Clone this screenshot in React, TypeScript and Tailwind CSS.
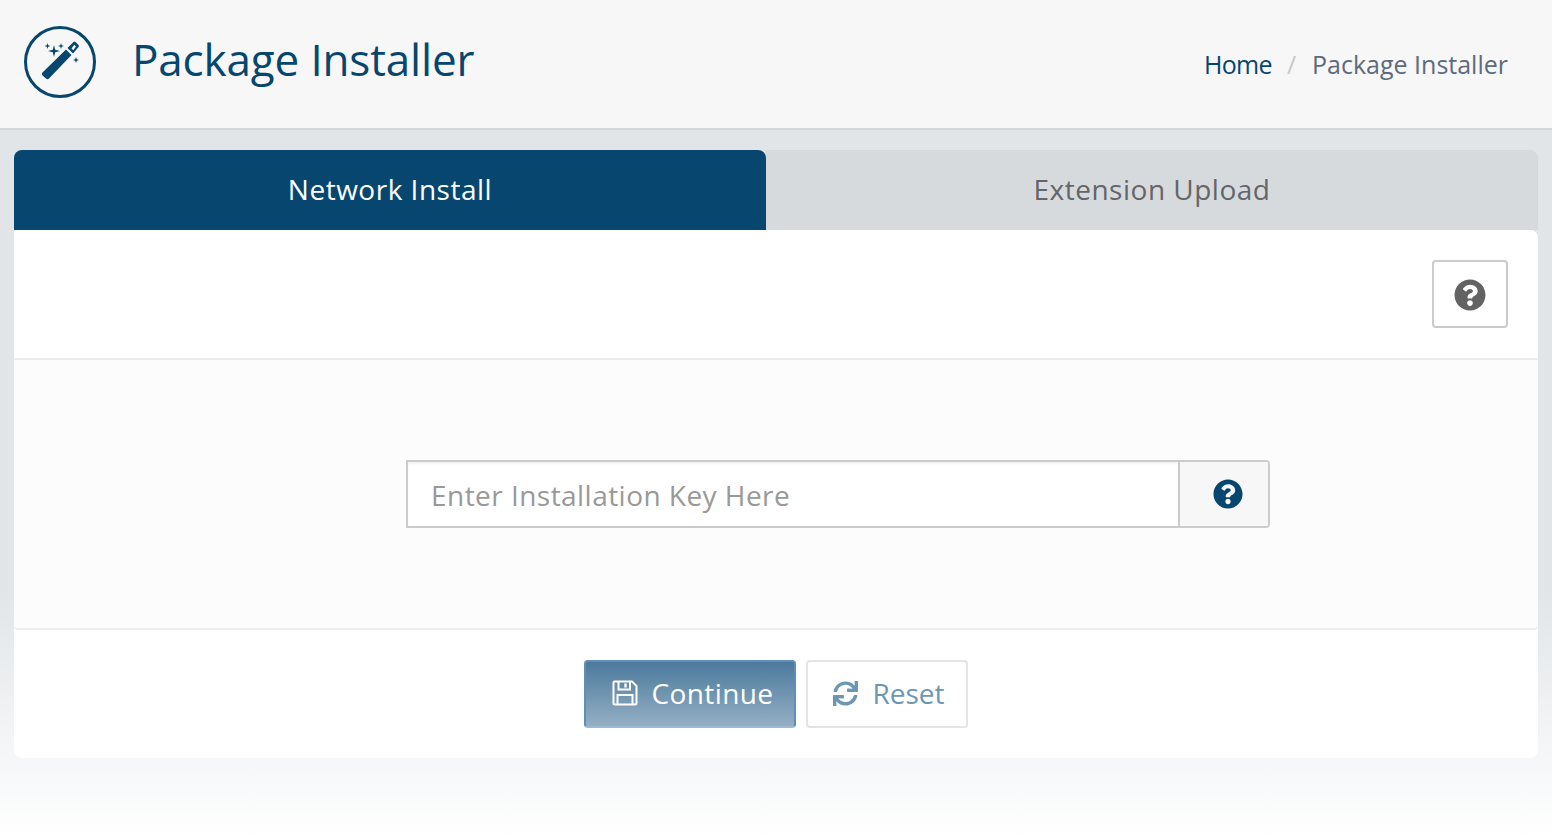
import { FaQuestionCircle, FaSync } from "react-icons/fa";

function Wand() {
  return (
    <svg viewBox="0 0 72 72" className="w-[72px] h-[72px] shrink-0">
      <circle cx="36" cy="36" r="34.5" fill="none" stroke="#06466f" strokeWidth="3" />
      <path d="M18.500 46.500 L42 23.500 L47.500 29 L25 52.500 Q23.500 54 22 52.500 L18.500 49.500 Q17 48 18.500 46.500Z" fill="#06466f" />
      <path d="M43.500 22 L49.500 16 Q50.500 15 51.500 16 L54.500 19 Q55.500 20 54.500 21 L49 27.500Z M47.500 22.500 L49.300 24.300 L52 20.500 L50.200 18.700Z" fill="#06466f" fillRule="evenodd" />
      <path d="M30 19 L31.200 23.800 L36 25 L31.200 26.200 L30 31 L28.800 26.200 L24 25 L28.800 23.800Z" fill="#06466f" />
      <path d="M23.500 17 L24.200 19.300 L26.500 20 L24.200 20.700 L23.500 23 L22.800 20.700 L20.500 20 L22.800 19.300Z" fill="#06466f" />
      <path d="M37 17 L37.700 19.300 L40 20 L37.700 20.700 L37 23 L36.300 20.700 L34 20 L36.300 19.300Z" fill="#06466f" />
      <path d="M52 31 L52.800 33.200 L55 34 L52.800 34.800 L52 37 L51.200 34.800 L49 34 L51.200 33.200Z" fill="#06466f" />
    </svg>
  );
}

function Floppy() {
  return (
    <svg viewBox="0 0 26 26" className="w-[26px] h-[26px] shrink-0" fill="none" stroke="currentColor">
      <path d="M2.500 1.500 H20 L24.500 6 V23 Q24.500 24.500 23 24.500 H3 Q1.500 24.500 1.500 23 V2.500 Q1.500 1.500 2.500 1.500Z" strokeWidth="2" />
      <path d="M6.500 2 V9.500 H18 V2" strokeWidth="2" />
      <path d="M13.500 3.500 V7.500" strokeWidth="2.500" />
      <path d="M5.500 24 V15 H20.500 V24" strokeWidth="2" />
    </svg>
  );
}

export default function App() {
  return (
    <div className="h-[840px] overflow-hidden flex flex-col bg-[linear-gradient(to_bottom,#e1e5e8_0%,#e1e5e8_70%,#ffffff_100%)] font-['Open_Sans','Noto_Sans',sans-serif]">
      <header className="h-[130px] shrink-0 bg-[#f7f7f7] border-b-2 border-[#d3d7da] flex items-center pl-6 pr-11">
        <div className="mb-1">
          <Wand />
        </div>
        <h1 className="ml-[36px] mb-[10px] text-[44px] leading-none text-[#06466f] font-normal tracking-[-0.15px]">Package Installer</h1>
        <nav className="ml-auto flex items-center text-[25px] leading-none">
          <a className="text-[#06466f] tracking-[-0.7px]">Home</a>
          <span className="ml-[15px] mr-[16px] text-[#c8cacc]">/</span>
          <span className="text-[#5d6b7c]">Package Installer</span>
        </nav>
      </header>
      <main className="pt-5 px-[14px]">
        <div className="flex h-20 text-[28px] tracking-[0.5px] leading-none">
          <div className="w-[752px] bg-[#06466f] text-white rounded-tl-lg rounded-tr-lg flex items-center justify-center pb-[2px]">Network Install</div>
          <div className="flex-1 bg-[#d7dadd] text-[#636669] rounded-tr-lg flex items-center justify-center pb-[2px]">Extension Upload</div>
        </div>
        <div className="bg-white rounded-b-lg rounded-tr-lg">
          <div className="h-[130px] border-b-2 border-[#e9eaeb] flex items-center justify-end pr-[30px]">
            <button className="w-[76px] h-[68px] border-2 border-[#cbcbcb] rounded bg-white flex items-center justify-center pt-px">
              <FaQuestionCircle className="text-[32px] text-[#636363]" />
            </button>
          </div>
          <div className="h-[270px] bg-[#fcfcfc] border-b-2 border-[#eeeeee] rounded-b pl-[392px] pt-[100px]">
            <div className="flex w-[864px] h-[68px] border-2 border-[#cbcbcb] rounded-r">
              <div className="flex-1 bg-white pl-[23px] flex items-center text-[28px] tracking-[0.46px] text-[#999999] shadow-[inset_0_2px_2px_rgba(0,0,0,0.05)] pt-[2px]">Enter Installation Key Here</div>
              <div className="w-[90px] bg-[#f7f7f7] border-l-2 border-[#cbcbcb] flex items-center justify-center pl-[7px] pb-[1px]">
                <FaQuestionCircle className="text-[30px] text-[#06466f]" />
              </div>
            </div>
          </div>
          <div className="h-[128px] flex items-center justify-center gap-[10px]">
            <button className="w-[212px] h-[68px] rounded border-2 border-[#5f8fb8] border-b-[#9ab9d4] bg-[linear-gradient(to_bottom,#4b7a9c,#95afc4)] text-white text-[28px] tracking-[0.4px] leading-none flex items-center justify-center gap-[14px] pb-[2px] pl-[5px]">
              <Floppy />
              Continue
            </button>
            <button className="w-[162px] h-[68px] rounded border-2 border-[#e4e4e4] bg-white text-[#6b97b2] text-[28px] leading-none flex items-center justify-center gap-[14px] pb-[2px] pl-[4px]">
              <FaSync className="text-[25px]" />
              Reset
            </button>
          </div>
        </div>
      </main>
    </div>
  );
}
